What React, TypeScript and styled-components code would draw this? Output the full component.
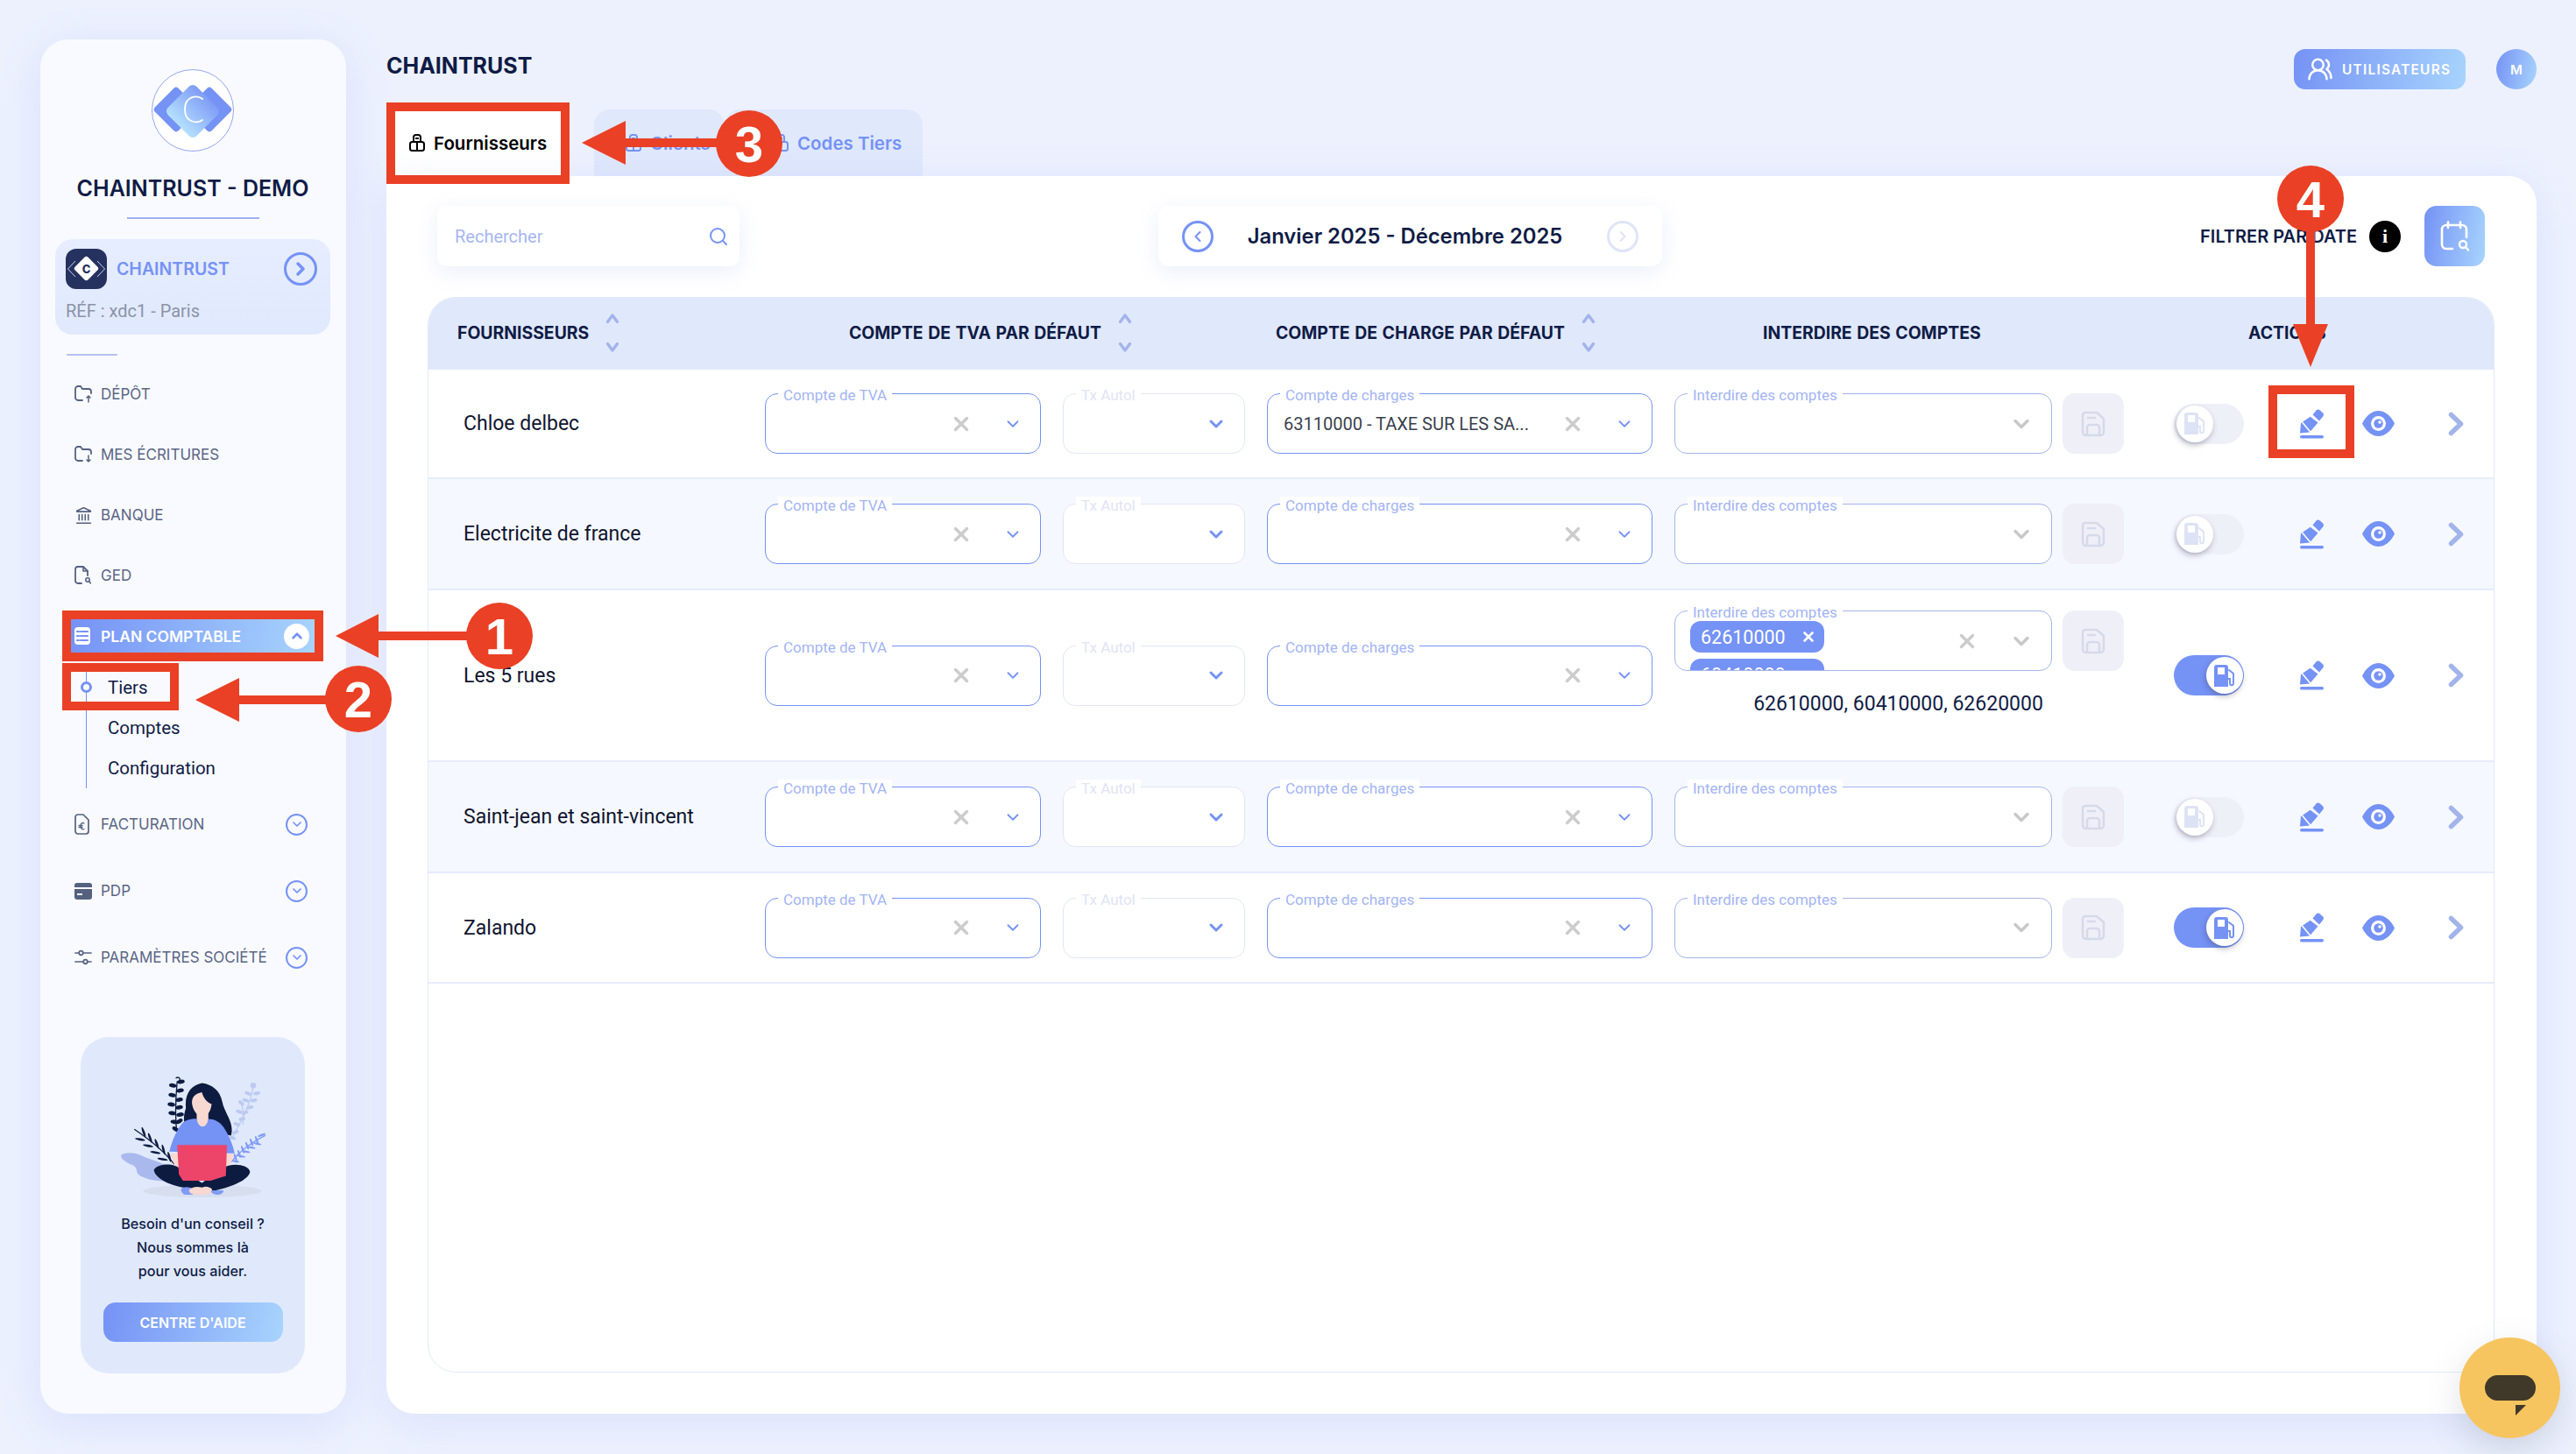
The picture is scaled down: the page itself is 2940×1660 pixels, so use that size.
import React from "react"
import styled, { createGlobalStyle } from "styled-components"
import { ChevronDown, ChevronUp, ChevronLeft, ChevronRight, Search, X, UsersRound, Landmark } from "lucide-react"

const HEAD = `Inter, "Liberation Sans", sans-serif`
const BODY = `Roboto, "Liberation Sans", sans-serif`
const NAVY = "#0f1c45"
const BLUE = "#7592f5"
const SOFT = "#a3b4ea"
const GRAD = "linear-gradient(100deg, #7592f5 0%, #a8d4fd 100%)"
const RED = "#ea4025"

const Global = createGlobalStyle`
    html, body { margin: 0; padding: 0; background: #edf1fe; }
    * { box-sizing: border-box; }
`

/* small drawings */
const FolderIcon = ({ down }: { down?: boolean }) => (
    <svg width="20" height="22" viewBox="0 0 20 22" fill="none" stroke="#55617f" strokeWidth="1.8" strokeLinecap="round" strokeLinejoin="round">
        <path d="M9 18H4a3 3 0 0 1-3-3V5a3 3 0 0 1 3-3h3l2 3h7a3 3 0 0 1 3 3v2" />
        {down ? <path d="M16 12v7m-2-2 2 2 2-2" strokeWidth="1.5" /> : <path d="M16 20v-7m-2 2 2-2 2 2" strokeWidth="1.5" />}
    </svg>
)
const GedIcon = () => (
    <svg width="19" height="22" viewBox="0 0 19 22" fill="none" stroke="#55617f" strokeWidth="1.8" strokeLinecap="round" strokeLinejoin="round">
        <path d="M8 20H4a3 3 0 0 1-3-3V4a3 3 0 0 1 3-3h6l5 5v5" />
        <path d="M10 1v5h5" strokeWidth="1.6" />
        <circle cx="15" cy="16" r="2.2" strokeWidth="1.5" />
        <path d="m17 18 1.5 2" strokeWidth="1.5" />
    </svg>
)
const InvoiceIcon = () => (
    <svg width="17" height="24" viewBox="0 0 17 24" fill="none" stroke="#55617f" strokeWidth="1.7" strokeLinecap="round" strokeLinejoin="round">
        <path d="M4 1h6l6 6v13a3 3 0 0 1-3 3H4a3 3 0 0 1-3-3V4a3 3 0 0 1 3-3z" />
        <path d="M11 11c-2-1.200-4-.2-4 3s2 4.500 4 3.500M5 13.500h4M5 15.500h4" strokeWidth="1.3" />
    </svg>
)
const CardIcon = () => (
    <svg width="20" height="20" viewBox="0 0 20 20" fill="#55617f">
        <path d="M3 1h14a3 3 0 0 1 3 3v2H0V4a3 3 0 0 1 3-3z" />
        <path fillRule="evenodd" d="M0 8h20v9a3 3 0 0 1-3 3H3a3 3 0 0 1-3-3zm3 5v2h6v-2z" />
    </svg>
)
const SettingsIcon = () => (
    <svg width="20" height="18" viewBox="0 0 20 18" fill="none" stroke="#55617f" strokeWidth="1.700" strokeLinecap="round">
        <path d="M1 4h4M10 4h9M1 14h9M15 14h4" />
        <circle cx="7.500" cy="4" r="2.300" />
        <circle cx="12.500" cy="14" r="2.300" />
    </svg>
)
const TableIcon = () => (
    <svg width="18" height="20" viewBox="0 0 18 20">
        <rect width="18" height="20" rx="4" fill="#fff" />
        <path d="M3 5h2M7 5h8M3 10h2M7 10h8M3 15h2M7 15h8" stroke="#7592f5" strokeWidth="2.200" strokeLinecap="round" />
    </svg>
)
const LockBagIcon = ({ color }: { color: string }) => (
    <svg width="18" height="21" viewBox="0 0 18 21" fill="none" stroke={color} strokeWidth="2" strokeLinejoin="round">
        <path d="M5 9V3.500A2.500 2.500 0 0 1 7.500 1h3A2.500 2.500 0 0 1 13 3.500V9" />
        <rect x="1" y="9" width="16" height="10" rx="2.500" />
        <path d="M9 9v10M7 5h4" />
    </svg>
)
const SaveIcon = () => (
    <svg width="30" height="30" viewBox="0 0 30 30" fill="none" stroke="#d6d9ea" strokeWidth="2.600" strokeLinejoin="round" strokeLinecap="round">
        <path d="M6 2h13l8 7v15a4 4 0 0 1-4 4H7a4 4 0 0 1-4-4V5a3 3 0 0 1 3-3z" />
        <path d="M8 27V19a3 3 0 0 1 3-3h8a3 3 0 0 1 3 3v8M9 8h8" />
    </svg>
)
const FuelIcon = ({ color }: { color: string }) => (
    <svg width="26" height="27" viewBox="0 0 26 27" fill="none">
        <path fill={color} fillRule="evenodd" d="M4 1h10a3 3 0 0 1 3 3v22H1V4a3 3 0 0 1 3-3zm1 3v8h8V4z" />
        <path stroke={color} strokeWidth="2" strokeLinecap="round" d="M18 7l5 4v11c0 3-4 3-4 0v-5h-2" />
    </svg>
)
const PencilIcon = () => (
    <svg width="27" height="34" viewBox="0 0 27 34" fill={BLUE}>
        <path d="M14.500 6.500 18.500 1.500c1.200-1.300 2.800-1.300 4-.3l3.400 3c1.300 1.200 1.300 2.900.4 4.100L22 13.500z" />
        <path d="M11.700 8.800 20.500 15.500 11 26.500 0 27.500 1 16z" />
        <path d="M2.500 15 12.500 27" stroke="#fff" strokeWidth="1.600" fill="none" />
        <rect y="30" width="27" height="3.500" rx="1.700" />
    </svg>
)
const EyeIcon = () => (
    <svg width="37" height="29" viewBox="0 0 37 29">
        <path fill={BLUE} d="M0 14.500C5 4.500 12 0 18.500 0S32 4.500 37 14.500C32 24.500 25 29 18.500 29S5 24.500 0 14.500z" />
        <circle cx="18.500" cy="14.500" r="8.500" fill="#fff" />
        <circle cx="18.500" cy="14.500" r="5.200" fill={BLUE} />
        <circle cx="20" cy="13" r="1.800" fill="#fff" />
    </svg>
)
const MoreIcon = () => (
    <svg width="18" height="28" viewBox="0 0 18 28" fill="none" stroke={SOFT} strokeWidth="5.500" strokeLinecap="round" strokeLinejoin="round">
        <path d="M3.500 3.500 14.500 14 3.500 24.500" />
    </svg>
)
const SortIcon = ({ up }: { up?: boolean }) => (
    <svg width="16" height="14" viewBox="0 0 16 14" fill="none" stroke={SOFT} strokeWidth="3.400" strokeLinecap="round" strokeLinejoin="round">
        <path d={up ? "M2.500 10.500 8 3l5.500 7.500" : "M2.500 3.500 8 11l5.500-7.500"} />
    </svg>
)
const CalendarIcon = () => (
    <svg width="36" height="36" viewBox="0 0 36 36" fill="none" stroke="#fff" strokeWidth="2.600" strokeLinecap="round" strokeLinejoin="round">
        <path d="M15 32H8a5 5 0 0 1-5-5V10a5 5 0 0 1 5-5h18a5 5 0 0 1 5 5v9" />
        <path d="M10 1.500V8M24 1.500V8" />
        <circle cx="27" cy="27" r="4" strokeWidth="2.400" />
        <path d="m30 30 3 3.500" strokeWidth="2.400" />
    </svg>
)

const Logo = () => (
    <svg width="94" height="94" viewBox="0 0 94 94">
        <defs>
            <linearGradient id="logoMain" x1="0" y1="0" x2="0" y2="1">
                <stop offset="0" stopColor="#7f9cf6" />
                <stop offset="1" stopColor="#b4e0ff" />
            </linearGradient>
        </defs>
        <ellipse cx="47" cy="47" rx="46.500" ry="46.500" fill="#fff" stroke="#93a6ef" strokeWidth="1" />
        <rect x="9" y="27" width="38" height="38" rx="4" transform="rotate(45 28 46)" fill="#7592f5" />
        <rect x="47" y="27" width="38" height="38" rx="4" transform="rotate(45 66 46)" fill="#7592f5" />
        <rect x="24" y="25" width="46" height="46" rx="6" transform="rotate(45 47 48)" fill="url(#logoMain)" />
        <path d="M58 34c-5-5-20-4-20 12s15 16 20 12" fill="none" stroke="#fff" strokeWidth="1.800" strokeLinecap="round" />
    </svg>
)
const CompanyLogo = () => (
    <svg width="47" height="46" viewBox="0 0 47 46">
        <rect width="47" height="46" rx="12" fill="#25315f" />
        <path d="M11 14 2.500 23 11 32M36 14l8.500 9-8.500 9" fill="none" stroke="#cdd5f0" strokeWidth="1" />
        <rect x="13" y="12" width="21" height="21" rx="3" transform="rotate(45 23.500 22.500)" fill="#fff" />
        <text x="23.500" y="27.500" textAnchor="middle" fontFamily={HEAD} fontWeight="800" fontSize="13" fill="#25315f">C</text>
    </svg>
)

const Leaf = ({ x, y, r, rx = 11, ry = 5, fill }: { x: number; y: number; r: number; rx?: number; ry?: number; fill: string }) => (
    <ellipse cx={x} cy={y} rx={rx} ry={ry} transform={`rotate(${r} ${x} ${y})`} fill={fill} />
)
const Illustration = () => {
    const dark = "#0c1b3f"
    const pale = "#bccaf0"
    return (
        <svg width="173" height="147" viewBox="400 300 520 440">
            <ellipse cx="692" cy="707" rx="203" ry="22" fill="#d7dfef" />
            <path d="M412 585c10-12 50-12 80 5 30 12 60 18 80 35l-10 48c-40 0-70-8-90-22-10-12 0-20-20-33-20-8-40-20-40-33z" fill="#a9b9ee" />
            <path d="M458 495C510 530 560 570 595 615" stroke={dark} strokeWidth="4" fill="none" />
            {[[490, 505, 70], [478, 530, 10], [512, 525, 70], [505, 552, 10], [535, 545, 70], [530, 575, 10], [558, 565, 75], [555, 598, 10], [578, 590, 75]].map(([x, y, r], i) => (
                <Leaf key={i} x={x} y={y} r={r} rx={18} ry={4} fill={dark} />
            ))}
            <path d="M600 320c15-10 20 10 5 12-4 40-8 100-2 170" stroke={dark} strokeWidth="4" fill="none" />
            {[[618, 332, -10], [590, 345, 10], [615, 362, -10], [588, 378, 10], [612, 394, -10], [585, 410, 10], [612, 420, -10], [588, 440, 10], [615, 445, -10], [595, 470, 10], [612, 468, -30], [600, 495, 30]].map(([x, y, r], i) => (
                <Leaf key={i} x={x} y={y} r={r} rx={13} ry={7} fill={dark} />
            ))}
            <path d="M866 345C860 400 830 460 790 530" stroke={pale} strokeWidth="4" fill="none" />
            <path d="M825 400c5 30 10 40 5 80" stroke={pale} strokeWidth="4" fill="none" />
            <circle cx="866" cy="345" r="10" fill={pale} />
            {[[878, 372, -10], [848, 372, 20], [868, 396, -10], [840, 396, 20], [855, 420, -15], [825, 405, 40], [838, 438, -15], [818, 435, 20], [828, 460, -10], [810, 478, 20], [805, 505, -20], [795, 525, 20]].map(([x, y, r], i) => (
                <Leaf key={i} x={x} y={y} r={r} rx={12} ry={6} fill={pale} />
            ))}
            <path d="M908 516C860 540 820 570 790 608" stroke="#7f9bf5" strokeWidth="4" fill="none" />
            {[[895, 515, -20], [878, 532, 70], [860, 540, 70], [845, 552, 70], [830, 565, 70], [818, 580, 70], [805, 592, 70], [880, 545, 10], [860, 558, 10], [842, 572, 10], [825, 588, 10], [805, 605, 10]].map(([x, y, r], i) => (
                <Leaf key={i} x={x} y={y} r={r} rx={14} ry={3.500} fill="#7f9bf5" />
            ))}
            <path d="M690 337c-40 8-60 40-55 85-8 25-12 50 5 65l150 30c12-45-22-75-30-115-8-40-35-60-70-65z" fill={dark} />
            <path d="M672 440h40v38c0 16-40 16-40 0z" fill="#f8d8d0" />
            <path d="M690 368c-25 5-36 18-34 40 3 22 18 44 36 44s30-22 31-44c-15-4-28-20-33-40z" fill="#f8d8d0" />
            <path d="M625 472c15-10 35-14 47-12 6 35 34 35 40 0 20 0 40 10 52 28 18 28 32 58 38 90l-224-6c10-38 25-76 47-100z" fill={BLUE} />
            <path d="M582 578h30l6 50-20-8c-8-12-14-26-16-42zM772 580h28c-2 16-10 32-20 42l-12 4z" fill="#f8d8d0" />
            <path d="M525 635c10-22 70-28 95 0l70 44 70-50c30-20 90-14 95 12-5 30-70 55-135 68l-60-10c-60-2-130-30-135-64z" fill={dark} />
            <path d="M618 700c10-10 30-8 42 0l-2 20h-26c-10-4-14-12-14-20zM720 705h44c0 10-10 15-20 15s-24-5-24-15z" fill="#7f9bf5" />
            <path d="M645 705c10-14 30-14 45-10 12-5 22-5 35 5l-5 15c-25 8-55 5-70 0z" fill="#f8d8d0" />
            <path d="M605 549h171l-4 106-52 17H625l-14-22z" fill="#ec4569" />
        </svg>
    )
}

/* layout */
const Page = styled.div`
    width: 2940px;
    height: 1660px;
    padding: 45px 45px 46px 46px;
    display: flex;
    gap: 46px;
    background: #edf1fe;
    position: relative;
    overflow: hidden;
    font-family: ${BODY};
`
const Sidebar = styled.aside`
    width: 349px;
    flex: none;
    background: #f9faff;
    border-radius: 32px;
    box-shadow: 0 10px 50px rgba(110, 135, 240, 0.16);
    padding: 34px 18px 46px 17px;
    display: flex;
    flex-direction: column;
    align-items: stretch;
`
const LogoWrap = styled.div`
    align-self: center;
    height: 94px;
`
const Brand = styled.h1`
    margin: 24px 0 0;
    text-align: center;
    font: 600 25px/36px ${HEAD};
    color: ${NAVY};
    white-space: nowrap;
`
const BrandRule = styled.div`
    width: 151px;
    height: 2px;
    margin: 15px auto 23px;
    background: #9fb0ee;
`
const CompanyCard = styled.div`
    height: 109px;
    border-radius: 20px;
    padding: 11px 15px 0 12px;
    background: linear-gradient(180deg, #e6edff, #e0e9fd);
`
const CompanyRow = styled.div`
    display: flex;
    align-items: center;
    gap: 11px;
    height: 46px;
    margin-bottom: 13px;
`
const CompanyName = styled.span`
    flex: 1;
    font: 600 19.500px ${HEAD};
    color: ${BLUE};
`
const RoundChevron = styled.span<{ $size: number; $border: number; $color?: string; $bg?: string }>`
    width: ${p => p.$size}px;
    height: ${p => p.$size}px;
    flex: none;
    border-radius: 50%;
    border: ${p => p.$border}px solid ${p => p.$color || BLUE};
    background: ${p => p.$bg || "transparent"};
    color: ${p => p.$color || BLUE};
    display: flex;
    align-items: center;
    justify-content: center;
`
const CompanyRef = styled.div`
    font: 400 20px/24px ${BODY};
    color: #8a93a8;
`
const ShortRule = styled.div`
    width: 58px;
    height: 2px;
    background: #b4c2f2;
    margin: 22px 0 0 13px;
`
const Nav = styled.nav`
    margin-top: 25px;
    display: flex;
    flex-direction: column;
`
const NavItem = styled.div<{ $after?: number; $active?: boolean }>`
    height: 38px;
    margin-bottom: ${p => p.$after ?? 31}px;
    margin-left: 18px;
    width: 278px;
    padding: 0 ${p => (p.$active ? 6 : 8)}px 0 4px;
    display: flex;
    align-items: center;
    background: ${p => (p.$active ? GRAD : "none")};
    color: ${p => (p.$active ? "#fff" : "#5a6685")};
    font: ${p => (p.$active ? "600 17.500px" : "400 17px")} ${HEAD};
    white-space: nowrap;
`
const NavIcon = styled.span`
    width: 30px;
    flex: none;
    display: flex;
    justify-content: flex-start;
    color: #55617f;
`
const NavLabel = styled.span`
    flex: 1;
`
const SubList = styled.div`
    margin: -14px 0 22px 35px;
    position: relative;
    height: 138px;
    border-left: 1.500px solid ${BLUE};
    display: flex;
    flex-direction: column;
`
const SubItem = styled.div`
    height: 46px;
    display: flex;
    align-items: center;
    padding-left: 24px;
    font: 400 20.500px ${BODY};
    color: ${NAVY};
`
const SubDot = styled.span`
    position: absolute;
    left: -7px;
    top: 16px;
    width: 13px;
    height: 13px;
    background: #f9faff;
    border: 3px solid ${BLUE};
    border-radius: 50%;
`
const HelpCard = styled.div`
    margin: auto 29px 0 29px;
    height: 384px;
    flex: none;
    border-radius: 32px;
    background: #e0e9fc;
    padding-top: 40px;
    display: flex;
    flex-direction: column;
    align-items: center;
`
const HelpText = styled.p`
    margin: 13px 0 0;
    font: 500 16.200px/27px ${HEAD};
    color: ${NAVY};
    text-align: center;
`
const HelpButton = styled.div`
    width: 205px;
    height: 45px;
    margin-top: 22px;
    border-radius: 14px;
    background: ${GRAD};
    display: flex;
    align-items: center;
    justify-content: center;
    font: 600 16px ${HEAD};
    color: #fff;
`
const Main = styled.main`
    flex: 1;
    min-width: 0;
    display: flex;
    flex-direction: column;
`
const TopBar = styled.header`
    height: 80px;
    padding-top: 11px;
    display: flex;
    align-items: flex-start;
`
const PageTitle = styled.h2`
    margin: 0;
    flex: 1;
    font: 700 25px/38px ${HEAD};
    color: ${NAVY};
`
const UsersButton = styled.div`
    width: 196px;
    height: 46px;
    border-radius: 13px;
    background: ${GRAD};
    color: #fff;
    display: flex;
    align-items: center;
    padding-left: 15px;
    gap: 10px;
    font: 600 15.300px ${HEAD};
    letter-spacing: 1.300px;
`
const Avatar = styled.div`
    width: 46px;
    height: 46px;
    margin-left: 35px;
    border-radius: 50%;
    background: ${GRAD};
    color: #fff;
    display: flex;
    align-items: center;
    justify-content: center;
    font: 600 15px ${HEAD};
`
const Tabs = styled.div`
    height: 76px;
    display: flex;
`
const Tab = styled.div<{ $active?: boolean; $width: number; $pad: number; $after?: number }>`
    width: ${p => p.$width}px;
    margin-right: ${p => p.$after ?? 0}px;
    padding-left: ${p => p.$pad}px;
    display: flex;
    align-items: center;
    gap: 10px;
    border-radius: 18px 18px 0 0;
    background: ${p => (p.$active ? "#fff" : "#e0e8fc")};
    color: ${p => (p.$active ? "#000" : BLUE)};
    font: 600 20.500px ${HEAD};
`
const Panel = styled.section`
    flex: 1;
    min-height: 0;
    background: #fff;
    border-radius: 0 32px 32px 32px;
    box-shadow: 0 10px 50px rgba(110, 135, 240, 0.14);
    padding: 34px 48px 47px 47px;
    display: flex;
    flex-direction: column;
`
const Toolbar = styled.div`
    height: 69px;
    padding: 0 11px;
    display: flex;
    align-items: center;
    flex: none;
`
const SearchBox = styled.div`
    width: 345px;
    height: 69px;
    border-radius: 10px;
    background: #fff;
    box-shadow: 0 6px 24px rgba(120, 140, 230, 0.14);
    display: flex;
    align-items: center;
    justify-content: space-between;
    padding: 0 12px 0 20px;
    font: 400 20px ${BODY};
    color: #a7b6f2;
`
const DateBox = styled.div`
    width: 575px;
    height: 69px;
    margin-left: 478px;
    border-radius: 12px;
    background: #fff;
    box-shadow: 0 6px 24px rgba(120, 140, 230, 0.14);
    display: flex;
    align-items: center;
    padding: 0 27px;
`
const DateText = styled.span`
    flex: 1;
    padding-right: 12px;
    text-align: center;
    font: 600 23.800px ${HEAD};
    color: ${NAVY};
    white-space: nowrap;
`
const FilterGroup = styled.div`
    margin-left: auto;
    display: flex;
    align-items: center;
`
const FilterLabel = styled.span`
    font: 600 20px ${HEAD};
    color: ${NAVY};
`
const InfoDot = styled.span`
    width: 36px;
    height: 36px;
    margin: 0 27px 0 14px;
    border-radius: 50%;
    background: #000;
    color: #fff;
    display: flex;
    align-items: center;
    justify-content: center;
    font: 700 22px "Liberation Serif", serif;
`
const CalendarButton = styled.div`
    width: 69px;
    height: 69px;
    border-radius: 14px;
    background: ${GRAD};
    display: flex;
    align-items: center;
    justify-content: center;
`
const Table = styled.div`
    margin-top: 35px;
    flex: 1;
    min-height: 0;
    border: 1px solid #e3e9fb;
    border-radius: 32px;
    overflow: hidden;
`
const HeadRow = styled.div`
    height: 82px;
    padding-bottom: 2px;
    background: #e0e8fc;
    display: flex;
    align-items: center;
`
const HeadCell = styled.div<{ $width?: number; $pad?: number }>`
    width: ${p => (p.$width ? `${p.$width}px` : "auto")};
    flex: none;
    padding-left: ${p => p.$pad ?? 0}px;
    display: flex;
    align-items: center;
    gap: 19px;
    font: 700 19.400px ${HEAD};
    word-spacing: 1px;
    color: ${NAVY};
    white-space: nowrap;
`
const Sort = styled.span`
    display: flex;
    flex-direction: column;
    gap: 18px;
`
const Row = styled.div<{ $height: number; $alt?: boolean }>`
    height: ${p => p.$height}px;
    display: flex;
    align-items: center;
    background: ${p => (p.$alt ? "#f5f8ff" : "#fff")};
    border-bottom: 2px solid #e6ecfb;
`
const Name = styled.div`
    width: 384px;
    padding-left: 40px;
    flex: none;
    font: 400 23px ${BODY};
    color: #10152e;
`
const Field = styled.div<{ $width: number; $tone?: "strong" | "mute" | "soft" }>`
    position: relative;
    width: ${p => p.$width}px;
    height: 69px;
    flex: none;
    margin-right: 25px;
    background: #fff;
    border-radius: 14px;
    border: 1.500px solid ${p => (p.$tone === "mute" ? "#e2e6f6" : p.$tone === "soft" ? SOFT : BLUE)};
    display: flex;
    align-items: center;
`
const FieldLabel = styled.label<{ $mute?: boolean }>`
    position: absolute;
    left: 14px;
    top: -9px;
    padding: 0 6px;
    background: #fff;
    font: 400 17px/20px ${BODY};
    color: ${p => (p.$mute ? "#e0e4f5" : "#a3b4f3")};
`
const FieldValue = styled.span`
    flex: 1;
    min-width: 0;
    padding-left: 18px;
    font: 400 20px ${BODY};
    color: #3a3f4d;
    white-space: nowrap;
`
const ClearMark = styled.span`
    display: flex;
    color: #cccccc;
    margin-right: 35px;
`
const Caret = styled.span<{ $color: string }>`
    display: flex;
    color: ${p => p.$color};
    margin-right: 20px;
`
const ForbidGroup = styled.div<{ $tall?: boolean }>`
    width: 513px;
    flex: none;
    height: ${p => (p.$tall ? "148px" : "69px")};
`
const ForbidRow = styled.div`
    display: flex;
`
const SaveButton = styled.div`
    width: 70px;
    height: 69px;
    margin-left: -13px;
    border-radius: 14px;
    background: #eff0f7;
    display: flex;
    align-items: center;
    justify-content: center;
`
const ChipBox = styled.div`
    flex: 1;
    height: 100%;
    overflow: hidden;
    padding: 11px 0 0 17px;
    display: flex;
    flex-direction: column;
    gap: 7px;
`
const Chip = styled.div`
    width: 153px;
    height: 36px;
    flex: none;
    border-radius: 12px;
    background: ${BLUE};
    color: #fff;
    display: flex;
    align-items: center;
    padding-left: 12px;
    gap: 17px;
    font: 400 21.500px ${BODY};
`
const ForbidNote = styled.div`
    margin-top: 24px;
    width: 429px;
    text-align: center;
    padding-left: 82px;
    font: 400 23px ${BODY};
    color: ${NAVY};
    white-space: nowrap;
`
const Toggle = styled.div<{ $on?: boolean }>`
    position: relative;
    width: 80px;
    height: 46px;
    margin: 0 64px 0 57px;
    flex: none;
    border-radius: 23px;
    background: ${p => (p.$on ? BLUE : "#eef0f8")};
`
const Knob = styled.span<{ $on?: boolean }>`
    position: absolute;
    top: 2px;
    left: ${p => (p.$on ? "37px" : "3px")};
    width: 42px;
    height: 42px;
    border-radius: 50%;
    background: #fff;
    box-shadow: -1px 3px 6px rgba(60, 60, 90, 0.35);
    display: flex;
    align-items: center;
    justify-content: center;
`
const ActionIcon = styled.span<{ $after: number }>`
    display: flex;
    flex: none;
    margin-right: ${p => p.$after}px;
`
const ChatButton = styled.div`
    position: absolute;
    left: 2807px;
    top: 1527px;
    width: 115px;
    height: 115px;
    border-radius: 50%;
    background: #f6c55f;
    box-shadow: 0 14px 40px rgba(90, 100, 120, 0.2);
    display: flex;
    align-items: center;
    justify-content: center;
`
const ChatPill = styled.span`
    position: relative;
    width: 58px;
    height: 29px;
    border-radius: 15px;
    background: #403829;
    &::after {
        content: "";
        position: absolute;
        right: 11px;
        top: 34px;
        border-style: solid;
        border-width: 0 0 12px 12px;
        border-color: transparent transparent #403829 transparent;
        transform: scaleY(-1) scaleX(-1);
    }
`
const RedBox = styled.div<{ $x: number; $y: number; $w: number; $h: number }>`
    position: absolute;
    left: ${p => p.$x}px;
    top: ${p => p.$y}px;
    width: ${p => p.$w}px;
    height: ${p => p.$h}px;
    border: 10px solid ${RED};
`
const Arrows = styled.svg`
    position: absolute;
    left: 0;
    top: 0;
    pointer-events: none;
`
const Step = styled.div<{ $x: number; $y: number }>`
    position: absolute;
    left: ${p => p.$x - 38}px;
    top: ${p => p.$y - 38}px;
    width: 76px;
    height: 76px;
    border-radius: 50%;
    background: ${RED};
    color: #fff;
    display: flex;
    align-items: center;
    justify-content: center;
    font: 700 58px "Liberation Sans", sans-serif;
`

const rows = [
    { name: "Chloe delbec", height: 125, charge: "63110000 - TAXE SUR LES SA..." },
    { name: "Electricite de france", height: 127, alt: true },
    { name: "Les 5 rues", height: 196, on: true, forbid: true },
    { name: "Saint-jean et saint-vincent", height: 127, alt: true },
    { name: "Zalando", height: 126, on: true }
]

const App = () => (
    <Page>
        <Global />
        <Sidebar>
            <LogoWrap><Logo /></LogoWrap>
            <Brand>CHAINTRUST - DEMO</Brand>
            <BrandRule />
            <CompanyCard>
                <CompanyRow>
                    <CompanyLogo />
                    <CompanyName>CHAINTRUST</CompanyName>
                    <RoundChevron $size={38} $border={3.500}><ChevronRight size={24} strokeWidth={3.500} /></RoundChevron>
                </CompanyRow>
                <CompanyRef>RÉF : xdc1 - Paris</CompanyRef>
            </CompanyCard>
            <ShortRule />
            <Nav>
                <NavItem><NavIcon><FolderIcon /></NavIcon><NavLabel>DÉPÔT</NavLabel></NavItem>
                <NavItem><NavIcon><FolderIcon down /></NavIcon><NavLabel>MES ÉCRITURES</NavLabel></NavItem>
                <NavItem><NavIcon><Landmark size={21} strokeWidth={1.800} /></NavIcon><NavLabel>BANQUE</NavLabel></NavItem>
                <NavItem><NavIcon><GedIcon /></NavIcon><NavLabel>GED</NavLabel></NavItem>
                <NavItem $active>
                    <NavIcon><TableIcon /></NavIcon>
                    <NavLabel>PLAN COMPTABLE</NavLabel>
                    <RoundChevron $size={29} $border={0} $bg="#fff"><ChevronUp size={18} strokeWidth={3.500} /></RoundChevron>
                </NavItem>
                <SubList>
                    <SubDot />
                    <SubItem>Tiers</SubItem>
                    <SubItem>Comptes</SubItem>
                    <SubItem>Configuration</SubItem>
                </SubList>
                <NavItem $after={38}>
                    <NavIcon><InvoiceIcon /></NavIcon>
                    <NavLabel>FACTURATION</NavLabel>
                    <RoundChevron $size={25} $border={2}><ChevronDown size={16} strokeWidth={2.600} /></RoundChevron>
                </NavItem>
                <NavItem $after={38}>
                    <NavIcon><CardIcon /></NavIcon>
                    <NavLabel>PDP</NavLabel>
                    <RoundChevron $size={25} $border={2}><ChevronDown size={16} strokeWidth={2.600} /></RoundChevron>
                </NavItem>
                <NavItem $after={0}>
                    <NavIcon><SettingsIcon /></NavIcon>
                    <NavLabel>PARAMÈTRES SOCIÉTÉ</NavLabel>
                    <RoundChevron $size={25} $border={2}><ChevronDown size={16} strokeWidth={2.600} /></RoundChevron>
                </NavItem>
            </Nav>
            <HelpCard>
                <Illustration />
                <HelpText>Besoin d'un conseil ?<br />Nous sommes là<br />pour vous aider.</HelpText>
                <HelpButton>CENTRE D'AIDE</HelpButton>
            </HelpCard>
        </Sidebar>
        <Main>
            <TopBar>
                <PageTitle>CHAINTRUST</PageTitle>
                <UsersButton><UsersRound size={30} strokeWidth={2} />UTILISATEURS</UsersButton>
                <Avatar>M</Avatar>
            </TopBar>
            <Tabs>
                <Tab $active $width={209} $after={28} $pad={26}><LockBagIcon color="#000" />Fournisseurs</Tab>
                <Tab $width={149} $pad={36}><LockBagIcon color={BLUE} />Clients</Tab>
                <Tab $width={226} $pad={55}><LockBagIcon color={BLUE} />Codes Tiers</Tab>
            </Tabs>
            <Panel>
                <Toolbar>
                    <SearchBox>Rechercher<Search size={24} color={BLUE} strokeWidth={2} /></SearchBox>
                    <DateBox>
                        <RoundChevron $size={36} $border={3}><ChevronLeft size={20} strokeWidth={2.500} /></RoundChevron>
                        <DateText>Janvier 2025 - Décembre 2025</DateText>
                        <RoundChevron $size={36} $border={3} $color="#dfe5f7"><ChevronRight size={20} strokeWidth={2.500} /></RoundChevron>
                    </DateBox>
                    <FilterGroup>
                        <FilterLabel>FILTRER PAR DATE</FilterLabel>
                        <InfoDot>i</InfoDot>
                        <CalendarButton><CalendarIcon /></CalendarButton>
                    </FilterGroup>
                </Toolbar>
                <Table>
                    <HeadRow>
                        <HeadCell $width={480} $pad={33}>FOURNISSEURS<Sort><SortIcon up /><SortIcon /></Sort></HeadCell>
                        <HeadCell $width={487}>COMPTE DE TVA PAR DÉFAUT<Sort><SortIcon up /><SortIcon /></Sort></HeadCell>
                        <HeadCell $width={556}>COMPTE DE CHARGE PAR DÉFAUT<Sort><SortIcon up /><SortIcon /></Sort></HeadCell>
                        <HeadCell $width={554}>INTERDIRE DES COMPTES</HeadCell>
                        <HeadCell>ACTIONS</HeadCell>
                    </HeadRow>
                    {rows.map(row => (
                        <Row key={row.name} $height={row.height} $alt={row.alt}>
                            <Name>{row.name}</Name>
                            <Field $width={315}>
                                <FieldLabel>Compte de TVA</FieldLabel>
                                <FieldValue />
                                <ClearMark><X size={26} strokeWidth={3.200} /></ClearMark>
                                <Caret $color={BLUE}><ChevronDown size={22} strokeWidth={2} /></Caret>
                            </Field>
                            <Field $width={208} $tone="mute">
                                <FieldLabel $mute>Tx Autol</FieldLabel>
                                <FieldValue />
                                <Caret $color={BLUE}><ChevronDown size={24} strokeWidth={3} /></Caret>
                            </Field>
                            <Field $width={440}>
                                <FieldLabel>Compte de charges</FieldLabel>
                                <FieldValue>{row.charge}</FieldValue>
                                <ClearMark><X size={26} strokeWidth={3.200} /></ClearMark>
                                <Caret $color={BLUE}><ChevronDown size={22} strokeWidth={2} /></Caret>
                            </Field>
                            <ForbidGroup $tall={row.forbid}>
                                <ForbidRow>
                                    <Field $width={431} $tone="soft">
                                        <FieldLabel>Interdire des comptes</FieldLabel>
                                        {row.forbid ? (
                                            <>
                                                <ChipBox>
                                                    <Chip>62610000<X size={18} strokeWidth={3.500} /></Chip>
                                                    <Chip>60410000</Chip>
                                                </ChipBox>
                                                <ClearMark><X size={26} strokeWidth={3.200} /></ClearMark>
                                            </>
                                        ) : (
                                            <FieldValue />
                                        )}
                                        <Caret $color="#c8c8c8"><ChevronDown size={28} strokeWidth={3} /></Caret>
                                    </Field>
                                    <SaveButton><SaveIcon /></SaveButton>
                                </ForbidRow>
                                {row.forbid && <ForbidNote>62610000, 60410000, 62620000</ForbidNote>}
                            </ForbidGroup>
                            <Toggle $on={row.on}>
                                <Knob $on={row.on}><FuelIcon color={row.on ? BLUE : "#dde3f4"} /></Knob>
                            </Toggle>
                            <ActionIcon $after={44}><PencilIcon /></ActionIcon>
                            <ActionIcon $after={61}><EyeIcon /></ActionIcon>
                            <ActionIcon $after={0}><MoreIcon /></ActionIcon>
                        </Row>
                    ))}
                </Table>
            </Panel>
        </Main>
        <ChatButton><ChatPill /></ChatButton>

        <RedBox $x={71} $y={697} $w={298} $h={58} />
        <RedBox $x={71} $y={757} $w={133} $h={54} />
        <RedBox $x={441} $y={117} $w={209} $h={93} />
        <RedBox $x={2589} $y={440} $w={98} $h={83} />
        <Arrows width="2940" height="1660" fill={RED}>
            <path d="M383 726l49-25v20h110v10H432v20z" />
            <path d="M223 799l50-25v20h110v10H273v20z" />
            <path d="M664 163l50-25v20h120v10H714v20z" />
            <path d="M2632 240h10v130h15l-20 49-20-49h15z" />
        </Arrows>
        <Step $x={570} $y={726}>1</Step>
        <Step $x={409} $y={798}>2</Step>
        <Step $x={855} $y={164}>3</Step>
        <Step $x={2637} $y={227}>4</Step>
    </Page>
)

export default App
